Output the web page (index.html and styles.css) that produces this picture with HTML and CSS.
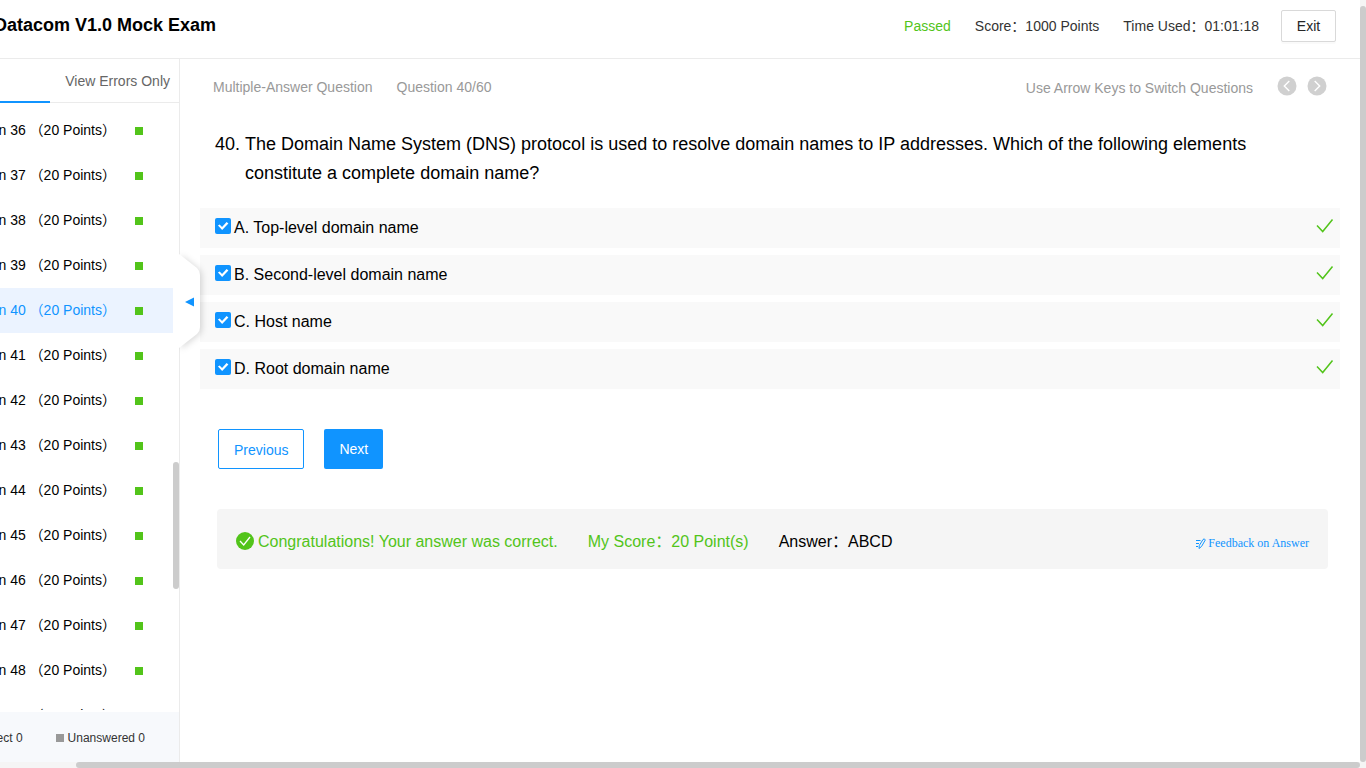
FILE: index.html
```
<!DOCTYPE html>
<html lang="en">
<head>
<meta charset="utf-8">
<title>Datacom V1.0 Mock Exam</title>
<link rel="stylesheet" href="styles.css">
</head>
<body>
<div class="viewport">
  <div class="page">
    <header class="header">
      <div class="title-box"><h1 class="title">Datacom V1.0 Mock Exam</h1></div>
      <div class="summary">
        <span class="passed">Passed</span>
        <span>Score：1000 Points</span>
        <span>Time Used：01:01:18</span>
        <button class="exit" type="button">Exit</button>
      </div>
    </header>
    <div class="body">
      <aside class="sidebar">
        <nav class="tabs">
          <span class="tab-active"></span>
          <a class="tab" href="#errors">View Errors Only</a>
        </nav>
        <div class="list-area">
          <ul class="list">
            <li class="row"><a href="#q36">Question 36 （20 Points）</a><i class="mark"></i></li>
            <li class="row"><a href="#q37">Question 37 （20 Points）</a><i class="mark"></i></li>
            <li class="row"><a href="#q38">Question 38 （20 Points）</a><i class="mark"></i></li>
            <li class="row"><a href="#q39">Question 39 （20 Points）</a><i class="mark"></i></li>
            <li class="row current"><a href="#q40">Question 40 （20 Points）</a><i class="mark"></i></li>
            <li class="row"><a href="#q41">Question 41 （20 Points）</a><i class="mark"></i></li>
            <li class="row"><a href="#q42">Question 42 （20 Points）</a><i class="mark"></i></li>
            <li class="row"><a href="#q43">Question 43 （20 Points）</a><i class="mark"></i></li>
            <li class="row"><a href="#q44">Question 44 （20 Points）</a><i class="mark"></i></li>
            <li class="row"><a href="#q45">Question 45 （20 Points）</a><i class="mark"></i></li>
            <li class="row"><a href="#q46">Question 46 （20 Points）</a><i class="mark"></i></li>
            <li class="row"><a href="#q47">Question 47 （20 Points）</a><i class="mark"></i></li>
            <li class="row"><a href="#q48">Question 48 （20 Points）</a><i class="mark"></i></li>
            <li class="row"><a href="#q49">Question 49 （20 Points）</a><i class="mark"></i></li>
          </ul>
          <div class="list-track"><div class="list-thumb"></div></div>
        </div>
        <div class="legend">
          <span>Incorrect 0</span>
          <span class="unanswered"><i class="mark grey"></i>Unanswered 0</span>
        </div>
      </aside>
      <main class="main">
        <button class="collapse" type="button" aria-label="Collapse question list">
          <svg width="30" height="110" viewBox="0 0 30 110"><path class="collapse-shape" d="M0 6 L18 20 Q21 23 21 27 V79 Q21 83 18 86 L0 100 Z"/><path fill="#1094ff" d="M6 54 15 49.500V58.500Z"/></svg>
        </button>
        <div class="meta">
          <span>Multiple-Answer Question</span>
          <span>Question 40/60</span>
          <span class="hint">Use Arrow Keys to Switch Questions</span>
          <div class="arrows">
            <button class="arrow" type="button" aria-label="Previous question"><svg width="20" height="20" viewBox="0 0 20 20"><circle cx="10" cy="10" r="9.500" fill="#d0d0d0"/><path d="M12.300 5 7.300 10 12.300 15" fill="none" stroke="#fff" stroke-width="1.400"/></svg></button>
            <button class="arrow" type="button" aria-label="Next question"><svg width="20" height="20" viewBox="0 0 20 20"><circle cx="10" cy="10" r="9.500" fill="#d0d0d0"/><path d="M7.700 5 12.700 10 7.700 15" fill="none" stroke="#fff" stroke-width="1.400"/></svg></button>
          </div>
        </div>
        <div class="question">
          <span class="number">40.</span>
          <p class="text">The Domain Name System (DNS) protocol is used to resolve domain names to IP addresses. Which of the following elements constitute a complete domain name?</p>
        </div>
        <div class="options">
          <label class="option"><input type="checkbox" class="box" checked><span class="choice">A. Top-level domain name</span><svg class="tick" width="18" height="16" viewBox="0 0 18 16"><path d="M1 7.500 6.700 13.500 16.500 1.500"/></svg></label>
          <label class="option"><input type="checkbox" class="box" checked><span class="choice">B. Second-level domain name</span><svg class="tick" width="18" height="16" viewBox="0 0 18 16"><path d="M1 7.500 6.700 13.500 16.500 1.500"/></svg></label>
          <label class="option"><input type="checkbox" class="box" checked><span class="choice">C. Host name</span><svg class="tick" width="18" height="16" viewBox="0 0 18 16"><path d="M1 7.500 6.700 13.500 16.500 1.500"/></svg></label>
          <label class="option"><input type="checkbox" class="box" checked><span class="choice">D. Root domain name</span><svg class="tick" width="18" height="16" viewBox="0 0 18 16"><path d="M1 7.500 6.700 13.500 16.500 1.500"/></svg></label>
        </div>
        <div class="actions">
          <button class="btn" type="button">Previous</button>
          <button class="btn primary" type="button">Next</button>
        </div>
        <section class="result">
          <span class="verdict"><svg width="18" height="18" viewBox="0 0 18 18"><circle cx="9" cy="9" r="9" fill="#52c41a"/><path d="M4 9 7.700 13 14 5" fill="none" stroke="#fff" stroke-width="1.300"/></svg><span class="line">Congratulations! Your answer was correct.</span></span>
          <span class="score line">My Score：20 Point(s)</span>
          <span class="line">Answer：ABCD</span>
          <a class="feedback" href="#feedback"><svg width="11" height="11" viewBox="0 0 11 11" fill="none" stroke="#1094ff"><path d="M1 2.500H5.500M1 5.500H4M1 8.500H3M4 10.500 4.300 7.500 8 1.500Q9.500 0 10.300 2L6.500 8.500 4 10.500"/></svg>Feedback on Answer</a>
        </section>
      </main>
    </div>
  </div>
  <div class="v-track"><div class="v-thumb"></div></div>
  <div class="h-track"><div class="h-thumb"></div></div>
  <div class="corner"></div>
</div>
</body>
</html>
```
FILE: styles.css
```
* { box-sizing: border-box; }
body {
  margin: 0;
  background: #fff;
  color: #000;
  font: 14px/20px "Liberation Sans", Arial, "Noto Sans CJK SC", sans-serif;
}
h1, p, ul { margin: 0; padding: 0; }
a { color: inherit; text-decoration: none; }
button { font: inherit; cursor: pointer; }
svg { display: block; flex: none; }

.viewport {
  display: grid;
  grid-template-columns: minmax(0, 1fr) 6px;
  grid-template-rows: minmax(0, 1fr) 6px;
  height: 100vh;
}
.page { display: flex; flex-direction: column; min-height: 0; }

.header {
  display: flex;
  justify-content: space-between;
  height: 59px;
  flex: none;
  border-bottom: 1px solid #ebebeb;
}
.title-box {
  display: flex;
  justify-content: flex-end;
  width: 216px;
  overflow: hidden;
  padding-top: 13px;
}
.title { font-size: 18px; line-height: 24px; white-space: nowrap; }
.summary {
  display: flex;
  align-items: center;
  gap: 24px;
  padding: 0 24px 6px 0;
  color: #333;
}
.passed { color: #52c41a; }
.exit {
  width: 55px;
  height: 32px;
  margin-left: -2px;
  padding: 0;
  background: #fff;
  border: 1px solid #d9d9d9;
  border-radius: 2px;
  box-shadow: 0 2px 0 rgba(0, 0, 0, 0.02);
  color: #262626;
}

.body { display: flex; flex: 1; min-height: 0; }
.sidebar {
  display: flex;
  flex-direction: column;
  flex: none;
  width: 180px;
  border-right: 1px solid #ebebeb;
}
.tabs {
  display: flex;
  justify-content: space-between;
  flex: none;
  height: 44px;
  border-bottom: 1px solid #ebebeb;
  color: #666;
}
.tab-active { width: 50px; height: 44px; border-bottom: 2px solid #1094ff; }
.tab { padding: 12px 9px 0 0; }
.list-area { display: flex; flex: 1; min-height: 0; }
.list {
  flex: 1;
  min-width: 0;
  margin-bottom: 2px;
  padding-top: 5px;
  overflow: hidden;
  list-style: none;
}
.row {
  display: flex;
  justify-content: flex-end;
  align-items: center;
  gap: 19px;
  height: 45px;
  padding-right: 30px;
  white-space: nowrap;
}
.row a { padding-bottom: 2px; }
.current { background: #ebf3ff; color: #1094ff; }
.mark { flex: none; width: 8px; height: 8px; background: #52c41a; }
.grey { background: #999; }
.list-track { display: flex; flex-direction: column; width: 6px; }
.list-track::before { content: ""; flex: 359; }
.list-track::after { content: ""; flex: 123; }
.list-thumb { flex: 127; background: #ccc; border-radius: 3px; }
.legend {
  display: flex;
  justify-content: flex-end;
  align-items: center;
  gap: 33px;
  flex: none;
  height: 50px;
  padding: 2px 34px 0 0;
  overflow: hidden;
  background: #f7f9fc;
  color: #333;
  font-size: 12px;
  white-space: nowrap;
}
.unanswered { display: flex; align-items: center; gap: 4px; }

.main { position: relative; flex: 1; min-width: 0; padding: 0 20px; }
.collapse {
  position: absolute;
  left: -1px;
  top: 189px;
  padding: 0;
  border: 0;
  background: none;
}
.collapse-shape { fill: #fff; filter: drop-shadow(2px 1px 3px rgba(0, 0, 0, 0.15)); }
.meta {
  display: flex;
  align-items: center;
  gap: 24px;
  height: 56px;
  padding: 0 13px;
  color: #999;
}
.hint { margin-left: auto; padding-top: 2px; }
.arrows { display: flex; gap: 10px; padding-bottom: 2px; }
.arrow { padding: 0; border: 0; background: none; }
.question {
  display: flex;
  gap: 5px;
  padding: 15px 80px 0 15px;
  font-size: 18px;
  line-height: 29px;
}
.number { flex: none; }
.options { display: grid; gap: 7px; padding-top: 20px; }
.option {
  display: flex;
  align-items: center;
  gap: 3px;
  height: 40px;
  padding: 0 6px 4px 15px;
  background: #f9f9f9;
  font-size: 16px;
}
.choice { padding-top: 4px; }
.box {
  appearance: none;
  display: grid;
  place-items: center;
  width: 16px;
  height: 16px;
  margin: 0;
  border-radius: 2px;
  background: #1094ff;
}
.box:checked::before {
  content: "";
  width: 12px;
  height: 10px;
  background: #fff;
  clip-path: polygon(8% 46%, 22% 34%, 42% 60%, 80% 10%, 95% 24%, 43% 90%);
}
.tick { margin-left: auto; fill: none; stroke: #52c41a; stroke-width: 1.5; }
.actions { display: flex; gap: 20px; padding: 40px 18px; }
.btn {
  height: 40px;
  padding: 2px 15px 0;
  border: 1px solid #1094ff;
  border-radius: 2px;
  background: #fff;
  color: #1094ff;
}
.primary { padding-top: 0; border: 0; background: #1094ff; color: #fff; }
.result {
  display: flex;
  align-items: center;
  gap: 30px;
  height: 60px;
  margin: 0 12px 0 17px;
  padding: 4px 19px 0;
  border-radius: 4px;
  background: #f5f5f5;
  font-size: 16px;
}
.line { padding-top: 2px; }
.verdict, .score { color: #52c41a; }
.verdict { display: flex; align-items: center; gap: 4px; }
.feedback {
  display: flex;
  align-items: center;
  gap: 2px;
  margin-left: auto;
  padding-top: 4px;
  color: #1094ff;
  font: 12px/16px "Liberation Serif", "Times New Roman", serif;
}

.v-track, .h-track, .corner { background: #f5f5f5; }
.v-track { padding-top: 6px; }
.v-thumb { height: 100%; background: #ccc; border-radius: 3px; }
.h-track { padding-left: 76px; }
.h-thumb { height: 100%; background: #ccc; border-radius: 3px; }
```
